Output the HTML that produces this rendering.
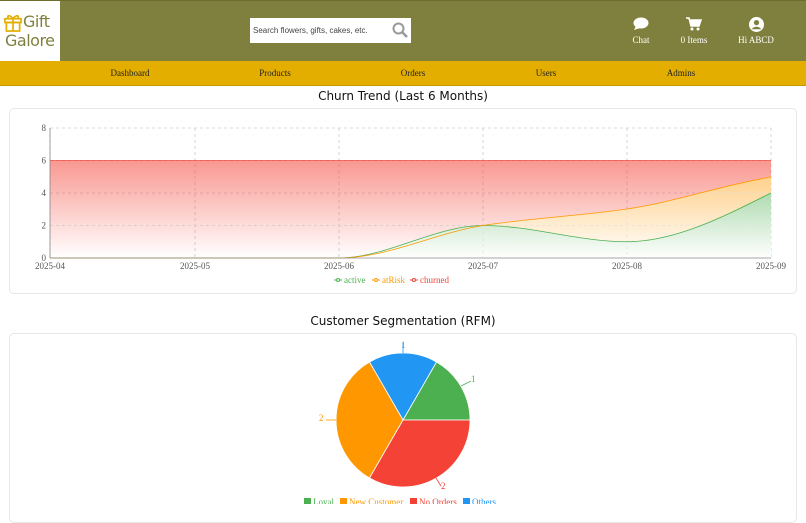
<!DOCTYPE html>
<html><head><meta charset="utf-8"><style>
*{margin:0;padding:0;box-sizing:border-box}
body{width:806px;height:504px;overflow:hidden;background:#fff;font-family:"Liberation Serif",serif;position:relative}
.hdr{position:absolute;left:0;top:0;width:806px;height:61px;background:#80803e;border-top:1px solid #6d6d30}
.logo{position:absolute;left:0;top:0;width:60px;height:60px;background:#fff}
.logo .t{position:absolute;font-family:"DejaVu Sans",sans-serif;color:#80803e;font-size:16px;line-height:17px;letter-spacing:-0.5px}
.search{position:absolute;left:250px;top:17px;width:161px;height:25px;background:#fff}
.search span{position:absolute;left:3px;top:8px;font:8px "Liberation Sans",sans-serif;color:#444}
.ic{position:absolute;top:16px;color:#fff;font-size:9px;text-align:center}
.nav{position:absolute;left:0;top:61px;width:806px;height:25px;background:#e3ae00;border-bottom:1px solid #c99a00}
.nav span{position:absolute;top:7px;font-size:9px;color:#222;transform:translateX(-50%)}
h2{position:absolute;width:806px;text-align:center;font-family:"DejaVu Sans",sans-serif;font-weight:normal;font-size:12px;color:#111}
.card{position:absolute;left:9px;width:788px;border:1px solid #e6e6e6;border-radius:5px}
</style></head><body>
<div class="hdr">
 <div class="logo">
  <svg style="position:absolute;left:4px;top:12px" width="18" height="19" viewBox="0 0 19 20"><g fill="none" stroke="#e3ae00" stroke-width="1.8"><rect x="1" y="6" width="17" height="4"/><rect x="2.5" y="10" width="14" height="9"/><line x1="9.5" y1="6" x2="9.5" y2="19"/><path d="M9.5 6C6 1 2 3 5 6M9.5 6C13 1 17 3 14 6"/></g></svg>
  <div class="t" style="left:23px;top:12px">Gift</div>
  <div class="t" style="left:5px;top:31px">Galore</div>
 </div>
 <div class="search"><span>Search flowers, gifts, cakes, etc.</span>
  <svg style="position:absolute;left:142px;top:4px" width="16" height="16" viewBox="0 0 16 16"><circle cx="6.5" cy="6.5" r="5" fill="none" stroke="#999" stroke-width="2"/><line x1="10" y1="10" x2="15" y2="15" stroke="#999" stroke-width="2.5"/></svg></div>
 <div class="ic" style="left:626px;width:30px"><svg width="16" height="14" viewBox="0 0 16 14"><ellipse cx="8" cy="6" rx="7.5" ry="5.5" fill="#fff"/><path d="M3 9L1 13 7 11z" fill="#fff"/></svg><div style="margin-top:2px">Chat</div></div>
 <div class="ic" style="left:674px;width:40px"><svg width="16" height="14" viewBox="0 0 16 14"><path d="M0 1H3L5 9H13L15 3H4" fill="#fff" stroke="#fff" stroke-width="1.5"/><circle cx="6" cy="12" r="1.5" fill="#fff"/><circle cx="12" cy="12" r="1.5" fill="#fff"/></svg><div style="margin-top:2px">0 Items</div></div>
 <div class="ic" style="left:731px;width:50px"><svg width="15" height="15" viewBox="0 0 16 16"><circle cx="8" cy="8" r="8" fill="#fff"/><circle cx="8" cy="6" r="2.8" fill="#80803e"/><path d="M3 13C5 9.5 11 9.5 13 13" fill="#80803e"/></svg><div style="margin-top:1px">Hi ABCD</div></div>
</div>
<div class="nav"><span style="left:130px">Dashboard</span><span style="left:275px">Products</span><span style="left:413px">Orders</span><span style="left:546px">Users</span><span style="left:681px">Admins</span></div>
<h2 style="top:89px">Churn Trend (Last 6 Months)</h2>
<div class="card" style="top:108px;height:186px"></div>
<svg style="position:absolute;left:0;top:0" width="806" height="504">
<defs>
<linearGradient id="r" x1="0" y1="0" x2="0" y2="1"><stop offset="0" stop-color="#f44336" stop-opacity=".55"/><stop offset="1" stop-color="#f44336" stop-opacity="0"/></linearGradient>
<linearGradient id="o" x1="0" y1="0" x2="0" y2="1"><stop offset="0" stop-color="#ff9800" stop-opacity=".45"/><stop offset="1" stop-color="#ff9800" stop-opacity="0"/></linearGradient>
<linearGradient id="g" x1="0" y1="0" x2="0" y2="1"><stop offset="0" stop-color="#4caf50" stop-opacity=".45"/><stop offset="1" stop-color="#4caf50" stop-opacity="0"/></linearGradient>
</defs>
<g stroke="#ccc" stroke-dasharray="3 3" stroke-width=".8">
<line x1="50" y1="128" x2="771" y2="128"/><line x1="50" y1="160.5" x2="771" y2="160.5"/><line x1="50" y1="193" x2="771" y2="193"/><line x1="50" y1="225.5" x2="771" y2="225.5"/>
<line x1="50" y1="128" x2="50" y2="258"/><line x1="195" y1="128" x2="195" y2="258"/><line x1="339" y1="128" x2="339" y2="258"/><line x1="483" y1="128" x2="483" y2="258"/><line x1="627" y1="128" x2="627" y2="258"/><line x1="771" y1="128" x2="771" y2="258"/>
</g>
<rect x="50" y="160.5" width="721" height="97.5" fill="url(#r)"/>
<line x1="50" y1="160.5" x2="771" y2="160.5" stroke="#f44336" stroke-opacity=".7"/>
<path d="M50 258H339C387 258 435 233 483 225.5C531 218 579 216 627 209C675 202 723 185 771 177V258Z" fill="#fff"/>
<path d="M50 258H339C387 258 435 233 483 225.5C531 218 579 216 627 209C675 202 723 185 771 177V258Z" fill="url(#o)"/>
<path d="M50 258H339C387 258 435 225.5 483 225.5C531 225.5 579 241.75 627 241.75C675 241.75 723 217 771 193V258Z" fill="#fff"/>
<path d="M50 258H339C387 258 435 225.5 483 225.5C531 225.5 579 241.75 627 241.75C675 241.75 723 217 771 193V258Z" fill="url(#g)"/>
<g stroke="#ddd" stroke-dasharray="3 3" stroke-width=".6"><line x1="483" y1="226" x2="483" y2="258"/><line x1="627" y1="210" x2="627" y2="258"/><line x1="50" y1="225.5" x2="771" y2="225.5"/><line x1="700" y1="193" x2="771" y2="193"/></g>
<path d="M50 258H339C387 258 435 225.5 483 225.5C531 225.5 579 241.75 627 241.75C675 241.75 723 217 771 193" fill="none" stroke="#4caf50" stroke-width=".8"/>
<path d="M50 258H339C387 258 435 233 483 225.5C531 218 579 216 627 209C675 202 723 185 771 177" fill="none" stroke="#ff9800" stroke-width=".8"/>
<g stroke="#888" stroke-width=".8"><line x1="50" y1="128" x2="50" y2="258"/><line x1="50" y1="258" x2="771" y2="258"/></g>
<g font-family="Liberation Serif" font-size="9" fill="#555">
<text x="46" y="131" text-anchor="end">8</text><text x="46" y="163.5" text-anchor="end">6</text><text x="46" y="196" text-anchor="end">4</text><text x="46" y="228.5" text-anchor="end">2</text><text x="46" y="261" text-anchor="end">0</text>
<g text-anchor="middle"><text x="50" y="269">2025-04</text><text x="195" y="269">2025-05</text><text x="339" y="269">2025-06</text><text x="483" y="269">2025-07</text><text x="627" y="269">2025-08</text><text x="771" y="269">2025-09</text></g>
<line x1="334" y1="280" x2="342" y2="280" stroke="#4caf50"/><circle cx="338" cy="280" r="1.5" fill="#fff" stroke="#4caf50"/><text x="344" y="283" fill="#4caf50">active</text>
<line x1="372" y1="280" x2="380" y2="280" stroke="#ff9800"/><circle cx="376" cy="280" r="1.5" fill="#fff" stroke="#ff9800"/><text x="382" y="283" fill="#ff9800">atRisk</text>
<line x1="410" y1="280" x2="418" y2="280" stroke="#f44336"/><circle cx="414" cy="280" r="1.5" fill="#fff" stroke="#f44336"/><text x="420" y="283" fill="#f44336">churned</text>
</g>
</svg>
<h2 style="top:314px">Customer Segmentation (RFM)</h2>
<div class="card" style="top:333px;height:190px"></div>
<svg style="position:absolute;left:0;top:0" width="806" height="504">
<g stroke="#fff" stroke-width=".8">
<path d="M403 420L470 420A67 67 0 0 0 436.5 362Z" fill="#4caf50"/>
<path d="M403 420L436.5 362A67 67 0 0 0 369.5 362Z" fill="#2196f3"/>
<path d="M403 420L369.5 362A67 67 0 0 0 369.5 478Z" fill="#ff9800"/>
<path d="M403 420L369.5 478A67 67 0 0 0 470 420Z" fill="#f44336"/>
</g>
<g fill="none" stroke-width=".8">
<path d="M461 386L471 381" stroke="#4caf50"/><path d="M403 353V343" stroke="#2196f3"/><path d="M336 420H326" stroke="#ff9800"/><path d="M436 478L441 486" stroke="#f44336"/>
</g>
<g font-family="Liberation Serif" font-size="9">
<text x="471" y="382" fill="#4caf50">1</text><text x="401" y="348" fill="#2196f3">1</text><text x="319" y="421" fill="#ff9800">2</text><text x="441" y="489" fill="#f44336">2</text>
<rect x="304" y="498" width="7" height="7" fill="#4caf50"/><text x="313" y="505" fill="#4caf50">Loyal</text>
<rect x="340" y="498" width="7" height="7" fill="#ff9800"/><text x="349" y="505" fill="#ff9800">New Customer</text>
<rect x="410" y="498" width="7" height="7" fill="#f44336"/><text x="419" y="505" fill="#f44336">No Orders</text>
<rect x="463" y="498" width="7" height="7" fill="#2196f3"/><text x="472" y="505" fill="#2196f3">Others</text>
</g>
</svg>
</body></html>
